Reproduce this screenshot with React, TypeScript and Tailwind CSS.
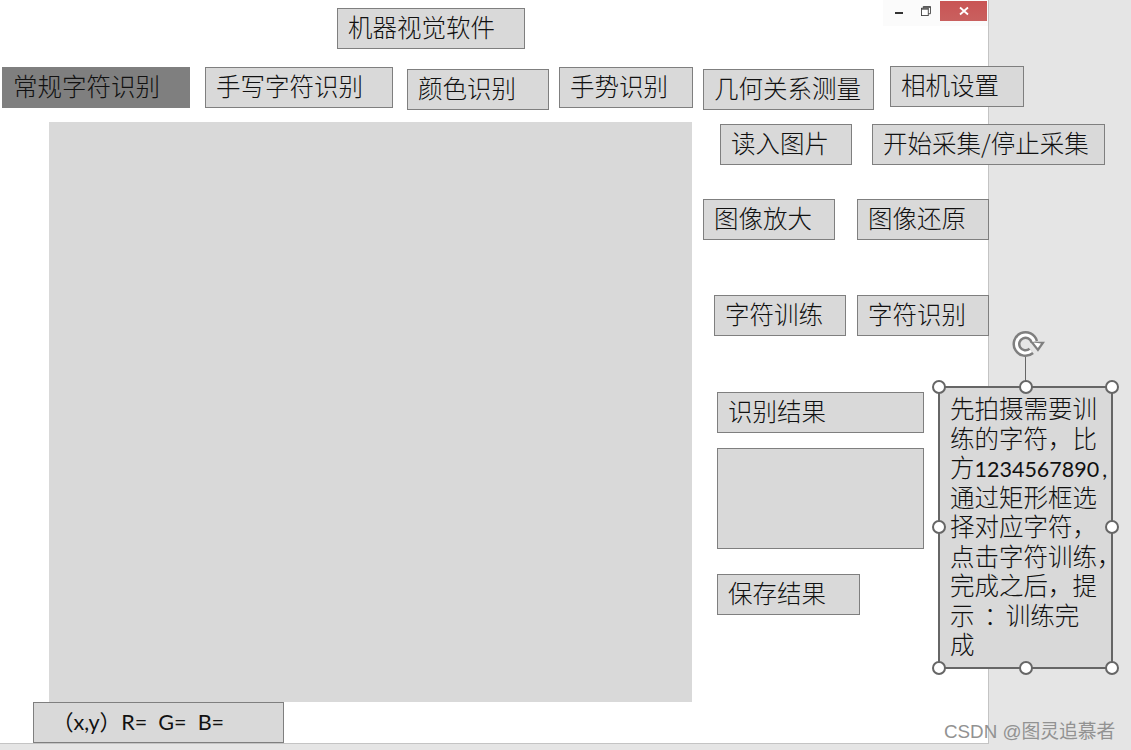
import React from 'react';

// slide mock-up: rows are laid out in flow, the selected note floats over them

const CJK = 'font-["Noto_Sans_CJK_SC",sans-serif] font-light';

function Box({ className, children }: { className: string; children?: React.ReactNode }) {
  return (
    <div
      className={`box-border flex h-[41px] shrink-0 items-center whitespace-nowrap border border-[#7f7f7f] pb-[2px] pl-[10px] text-[24.5px] leading-none text-[#111] ${CJK} ${className}`}
    >
      {children}
    </div>
  );
}

function Handle({ className }: { className: string }) {
  return (
    <div className={`absolute box-border h-[14px] w-[14px] rounded-full border-[2.5px] border-[#666] bg-white ${className}`} />
  );
}

function RotateIcon() {
  return (
    <svg viewBox="0 0 36 30" className="absolute left-[70px] top-[-58px] h-[30px] w-[36px]">
      <path d="M24.2 11.7 A9 9 0 1 0 21.3 20.9" fill="none" stroke="#7f7f7f" strokeWidth="8" />
      <path d="M20 11.7 L35 11.7 L28 21.7 Z" fill="#7f7f7f" />
      <path d="M24.2 11.7 A9 9 0 1 0 21.3 20.9" fill="none" stroke="#fff" strokeWidth="3" />
      <path d="M23.5 12.5 L31 13.5 L27.8 18 Z" fill="#fff" />
    </svg>
  );
}

function WindowControls() {
  return (
    <div className="ml-[358px] flex h-[26px] w-[105px] shrink-0 items-start bg-[#fbfbfb]">
      <div className="ml-[12px] mt-[12px] h-[2px] w-[8px] bg-[#333]" />
      <svg viewBox="0 0 11 11" className="ml-[18px] mt-[6px] h-[10px] w-[10px]">
        <rect x="0.5" y="2.5" width="7.5" height="8" fill="#fff" stroke="#444" />
        <path d="M2.5 2.5 V0.5 H10.5 V8.5 H8" fill="none" stroke="#444" />
        <path d="M0.5 3.5 H8 M2.5 1.5 H10.5" stroke="#444" />
      </svg>
      <div className="ml-[9px] mt-px flex h-[20px] w-[47px] items-center justify-center bg-gradient-to-b from-[#c95454] to-[#c9605f]">
        <svg viewBox="0 0 10 10" className="h-[10px] w-[10px]">
          <path d="M1 1.5 L9 8.5 M9 1.5 L1 8.5" stroke="#fff" strokeWidth="1.8" />
        </svg>
      </div>
    </div>
  );
}

function Note() {
  return (
    <div
      className={`absolute left-[938px] top-[386px] box-border h-[283px] w-[175px] whitespace-nowrap border-2 border-[#666] bg-[#d9d9d9] pl-[10px] pt-[5px] text-[24.5px] leading-[29.5px] text-[#111] ${CJK}`}
    >
      <div className="absolute left-[85px] top-[-33px] h-[33px] w-px bg-[#666]" />
      <RotateIcon />
      <div>先拍摄需要训</div>
      <div>练的字符，比</div>
      <div className="h-[29.5px]">
        方
        <span className="font-['Lato',sans-serif] text-[21.5px] font-normal leading-none">
          1234567890<span className="ml-[3px]">,</span>
        </span>
      </div>
      <div>通过矩形框选</div>
      <div>择对应字符，</div>
      <div>点击字符训练，</div>
      <div>完成之后，提</div>
      <div className="[word-spacing:-2px]">
        示 <span className="relative left-[6px]">：</span> 训练完
      </div>
      <div>成</div>
      <Handle className="left-[-8px] top-[-8px]" />
      <Handle className="left-[79px] top-[-8px]" />
      <Handle className="left-[165px] top-[-8px]" />
      <Handle className="left-[-8px] top-[132px]" />
      <Handle className="left-[165px] top-[132px]" />
      <Handle className="left-[-8px] top-[273px]" />
      <Handle className="left-[79px] top-[273px]" />
      <Handle className="left-[165px] top-[273px]" />
    </div>
  );
}

export default function App() {
  return (
    <div className="relative h-[750px] w-[1131px] overflow-hidden bg-[#e5e5e5]">
      {/* slide sheet, the boxes may run past its right edge */}
      <div className="absolute left-0 top-0 h-[744px] w-[989px] border-b border-r border-[#c4c4c4] bg-white" />

      <div className="relative flex flex-col">
        {/* title + window buttons */}
        <div className="flex h-[49px] items-start">
          <Box className="ml-[337px] mt-[8px] w-[188px] bg-[#d9d9d9]">机器视觉软件</Box>
          <WindowControls />
        </div>

        {/* tabs */}
        <div className="mt-[17px] flex h-[44px] items-start">
          <Box className="ml-[2px] mt-px w-[188px] bg-[#7f7f7f]">常规字符识别</Box>
          <Box className="ml-[15px] mt-px w-[188px] bg-[#d9d9d9]">手写字符识别</Box>
          <Box className="ml-[14px] mt-[3px] w-[142px] bg-[#d9d9d9]">颜色识别</Box>
          <Box className="ml-[10px] mt-px w-[134px] bg-[#d9d9d9]">手势识别</Box>
          <Box className="ml-[10px] mt-[3px] w-[171px] bg-[#d9d9d9]">几何关系测量</Box>
          <Box className="ml-[16px] w-[134px] bg-[#d9d9d9]">相机设置</Box>
        </div>

        {/* image area + tools */}
        <div className="mt-[12px] flex items-start pl-[49px]">
          <div className="h-[580px] w-[643px] shrink-0 bg-[#d9d9d9]" />
          <div className="flex flex-col">
            <div className="ml-[28px] mt-[2px] flex gap-[20px]">
              <Box className="w-[132px] bg-[#d9d9d9]">读入图片</Box>
              <Box className="w-[233px] bg-[#d9d9d9]">开始采集/停止采集</Box>
            </div>
            <div className="ml-[11px] mt-[34px] flex gap-[22px]">
              <Box className="w-[132px] bg-[#d9d9d9]">图像放大</Box>
              <Box className="w-[132px] bg-[#d9d9d9]">图像还原</Box>
            </div>
            <div className="ml-[22px] mt-[55px] flex gap-[11px]">
              <Box className="w-[132px] bg-[#d9d9d9]">字符训练</Box>
              <Box className="w-[132px] bg-[#d9d9d9]">字符识别</Box>
            </div>
            <div className="ml-[25px] mt-[56px] flex flex-col items-start">
              <Box className="w-[207px] bg-[#d9d9d9]">识别结果</Box>
              <Box className="mt-[15px] h-[101px] w-[207px] bg-[#d9d9d9]" />
              <Box className="mt-[25px] w-[143px] bg-[#d9d9d9]">保存结果</Box>
            </div>
          </div>
        </div>

        {/* pixel readout */}
        <div className="ml-[33px] box-border flex h-[41px] w-[251px] items-center whitespace-pre border border-[#7f7f7f] bg-[#d9d9d9] pl-[18px] font-['Lato','Noto_Sans_CJK_SC',sans-serif] text-[21.6px] leading-none text-[#111]">
          （x,y）R=  G=  B=
        </div>
      </div>

      <Note />

      {/* watermark */}
      <div className="absolute left-[944px] top-[721px] whitespace-nowrap font-['Liberation_Sans','Noto_Sans_CJK_SC',sans-serif] text-[18.8px] leading-[22px] text-[#929292]">
        CSDN @图灵追慕者
      </div>
    </div>
  );
}
